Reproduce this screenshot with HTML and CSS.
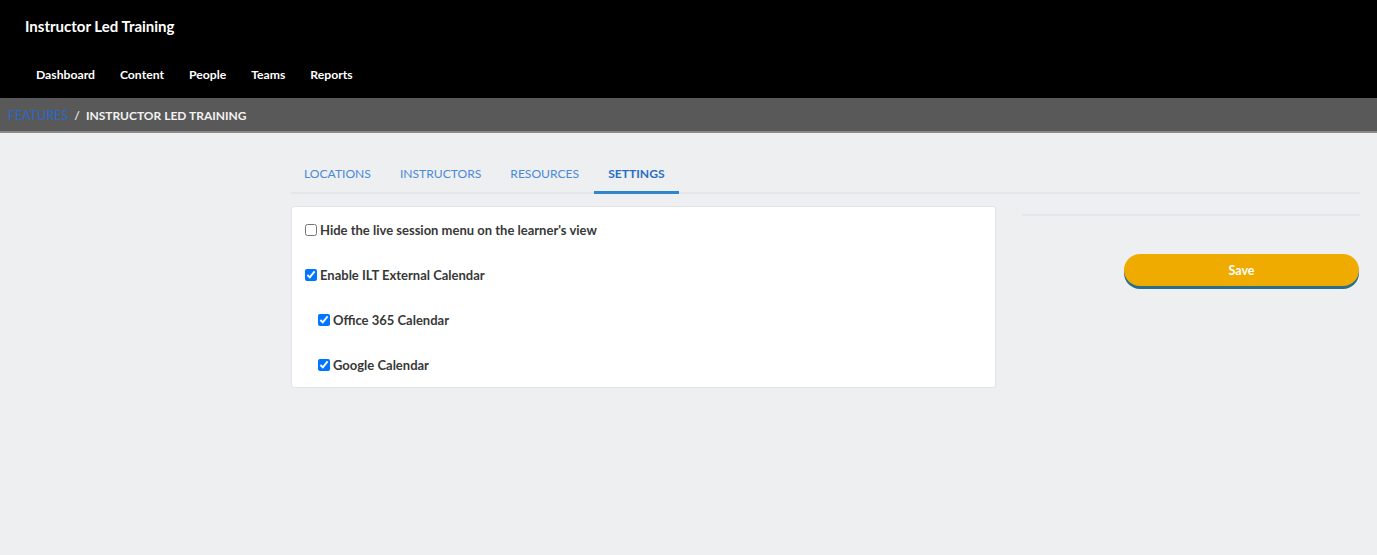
FILE: index.html
```html
<!DOCTYPE html>
<html lang="en">
<head>
    <meta charset="UTF-8">
    <meta name="viewport" content="width=device-width, initial-scale=1.0">
    <title>Instructor Led Training</title>
    <link rel="stylesheet" href="styles.css">
</head>
<body>
    <header class="topbar">
        <div class="app-title">Instructor Led Training</div>
        <nav class="main-nav">
            <a href="#">Dashboard</a>
            <a href="#">Content</a>
            <a href="#">People</a>
            <a href="#">Teams</a>
            <a href="#">Reports</a>
        </nav>
    </header>

    <div class="breadcrumb">
        <a href="#" class="crumb-link">FEATURES</a>
        <span class="crumb-sep">/</span>
        <span class="crumb-current">INSTRUCTOR LED TRAINING</span>
    </div>

    <main class="page">
        <div class="tabs">
            <a href="#" class="tab">LOCATIONS</a>
            <a href="#" class="tab">INSTRUCTORS</a>
            <a href="#" class="tab">RESOURCES</a>
            <a href="#" class="tab active">SETTINGS</a>
        </div>

        <div class="content-row">
            <section class="card">
                <label class="option">
                    <input type="checkbox">
                    <span>Hide the live session menu on the learner's view</span>
                </label>
                <label class="option">
                    <input type="checkbox" checked>
                    <span>Enable ILT External Calendar</span>
                </label>
                <label class="option sub">
                    <input type="checkbox" checked>
                    <span>Office 365 Calendar</span>
                </label>
                <label class="option sub">
                    <input type="checkbox" checked>
                    <span>Google Calendar</span>
                </label>
            </section>

            <aside class="side">
                <div class="side-line"></div>
                <button class="save-btn">Save</button>
            </aside>
        </div>
    </main>
</body>
</html>
```

FILE: styles.css
```css
body {
    margin: 0;
    background-color: #eeeff1;
    font-family: 'Lato', 'Noto Sans', sans-serif;
    height: 555px;
    overflow: hidden;
}

a {
    text-decoration: none;
}

.topbar {
    background-color: #000;
    height: 98px;
    padding-left: 25px;
    box-sizing: border-box;
}

.app-title {
    color: #fff;
    font-size: 15px;
    font-weight: 700;
    padding-top: 17px;
    line-height: 18px;
}

.main-nav {
    display: flex;
    gap: 25px;
    padding-left: 11px;
    margin-top: 32px;
}

.main-nav a {
    color: #fff;
    font-size: 12.2px;
    font-weight: 700;
    line-height: 16px;
}

.breadcrumb {
    background-color: #595959;
    height: 31px;
    padding-top: 2px;
    border-bottom: 2px solid #8a8a8a;
    display: flex;
    align-items: center;
    padding-left: 8px;
    font-size: 12px;
    font-weight: 700;
}

.crumb-link {
    color: #2a68c8;
    font-weight: 400;
    font-size: 12.5px;
}

.crumb-sep {
    color: #ddd;
    margin: 0 6px;
}

.crumb-current {
    color: #f2f2f2;
}

.page {
    margin-left: 291px;
    width: 1069px;
    padding-top: 25px;
}

.tabs {
    display: flex;
    border-bottom: 2px solid #e4e6e9;
}

.tab {
    color: #4a8ad6;
    font-size: 12.1px;
    padding: 8px 14.5px 10px;
    border-bottom: 3px solid transparent;
    margin-bottom: -2px;
    line-height: 15px;
}

.tab:first-child {
    padding-left: 13px;
}

.tab.active {
    color: #2a6dc4;
    font-weight: 700;
    border-bottom-color: #2f86cc;
}

.content-row {
    display: flex;
    margin-top: 12px;
}

.card {
    width: 705px;
    box-sizing: border-box;
    background-color: #fff;
    border: 1px solid #e2e4e7;
    border-radius: 3px;
    padding: 14px 13px 14px;
}

.option {
    display: flex;
    align-items: center;
    height: 17px;
    margin-bottom: 28px;
    color: #383838;
    font-size: 13px;
    font-weight: 700;
}

.option:last-child {
    margin-bottom: 0;
}

.option input {
    margin: 0 3px 0 0;
    width: 12px;
    height: 12px;
}

.option.sub {
    padding-left: 13px;
}

.side {
    flex: 1;
    margin-left: 26px;
    display: flex;
    flex-direction: column;
    align-items: flex-end;
}

.side-line {
    width: 100%;
    border-top: 2px solid #e4e6e9;
    margin-top: 8px;
}

.save-btn {
    margin-top: 38px;
    width: 235px;
    height: 32px;
    margin-right: 1px;
    border: none;
    border-radius: 16px;
    background-color: #f0ab00;
    color: #fff;
    font-family: 'Lato', sans-serif;
    font-size: 12.5px;
    font-weight: 700;
    box-shadow: 0 3px 0 #2b6f86;
    cursor: pointer;
}
```
